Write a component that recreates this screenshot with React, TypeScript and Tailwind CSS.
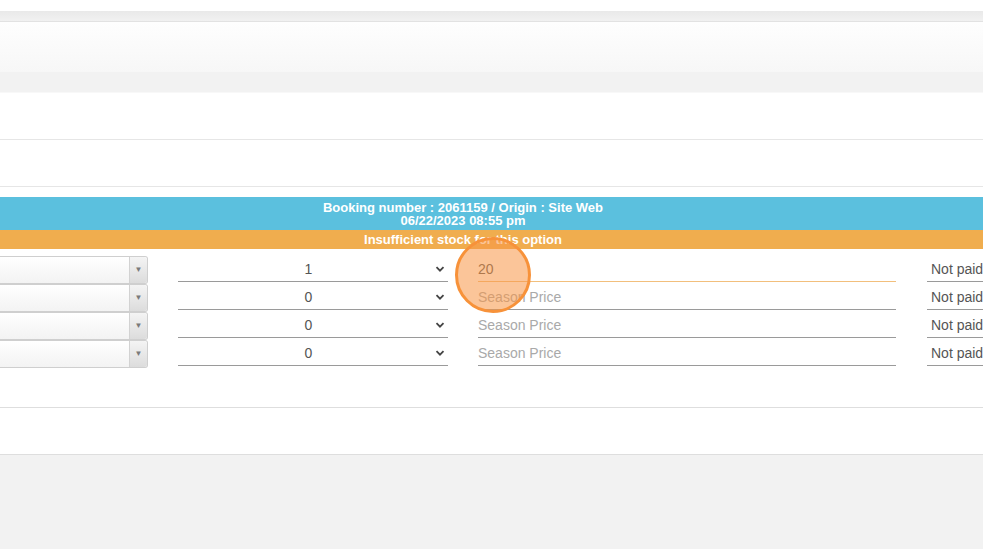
import React from 'react';

const rows = [
  { qty: '1', price: '20', focused: true },
  { qty: '0', price: '', focused: false },
  { qty: '0', price: '', focused: false },
  { qty: '0', price: '', focused: false },
];

const Chevron: React.FC = () => (
  <svg width="10" height="10" viewBox="0 0 10 10" className="text-[#444]">
    <path d="M1.5 3.2 L5 6.7 L8.5 3.2" fill="none" stroke="currentColor" strokeWidth="1.8" />
  </svg>
);

const OptionRow: React.FC<{ qty: string; price: string; focused: boolean }> = ({ qty, price, focused }) => (
  <div className="flex h-[28px] items-start">
    <div className="flex h-[28px] w-[148px] shrink-0 rounded-r-[3px] border border-l-0 border-[#cfcfcf] bg-gradient-to-b from-white to-[#f3f3f3]">
      <div className="flex-1" />
      <div className="flex w-[18px] items-center justify-center rounded-r-[3px] border-l border-[#d2d2d2] bg-gradient-to-b from-[#f4f4f4] to-[#dcdcdc]">
        <span className="text-[8px] leading-none text-[#7a7a7a]">▼</span>
      </div>
    </div>
    <div className="ml-[30px] flex h-[26px] w-[270px] shrink-0 items-center border-b border-[#9a9a9a] pt-[1px] pr-[3px]">
      <span className="flex-1 pl-[4px] text-center text-[14px] text-[#555]">{qty}</span>
      <Chevron />
    </div>
    <div
      className={`ml-[30px] flex h-[26px] w-[418px] shrink-0 items-center border-b pt-[1px] text-[14px] ${
        focused ? 'border-[#f2bf7c]' : 'border-[#9a9a9a]'
      }`}
    >
      {price ? <span className="text-[#555]">{price}</span> : <span className="text-[#a9a9a9]">Season Price</span>}
    </div>
    <div className="ml-[31px] flex h-[26px] flex-1 items-center border-b border-[#9a9a9a] pt-[1px] pl-[4px] text-[14px] whitespace-nowrap text-[#555]">
      Not paid
    </div>
  </div>
);

const App: React.FC = () => {
  return (
    <div className="relative h-[549px] w-[983px] overflow-hidden bg-[#f2f2f2] font-['Liberation_Sans',Arial,sans-serif]">
      <div className="h-[11px] bg-white" />
      <div className="h-[11px] border-b border-[#e3e3e3] bg-gradient-to-b from-[#e9e9e9] to-[#f1f1f1]" />
      <div className="h-[50px] bg-gradient-to-b from-[#fefefe] to-[#f7f7f7] shadow-[0_1px_2px_rgba(0,0,0,0.08)]" />
      <div className="h-[21px] border-b border-[#f8f8f8] bg-[#f2f2f2]" />

      <div className="bg-white">
        <div className="h-[47px] border-b border-[#e6e6e6]" />
        <div className="h-[47px] border-b border-[#e6e6e6]" />
        <div className="h-[10px]" />

        <div className="flex h-[33px] flex-col items-center justify-center bg-[#5bc0de] pr-[57px] text-[13px] leading-[13px] font-bold text-white">
          <div>Booking number : 2061159 / Origin : Site Web</div>
          <div>06/22/2023 08:55 pm</div>
        </div>
        <div className="flex h-[19px] items-center justify-center bg-[#f0ad4e] pr-[57px] text-[13px] font-bold text-white">
          Insufficient stock for this option
        </div>

        <div className="pt-[7px] pb-[39px]">
          {rows.map((r, i) => (
            <OptionRow key={i} {...r} />
          ))}
        </div>

        <div className="h-[48px] border-t border-b border-[#dedede]" />
      </div>

      <div className="absolute top-[237px] left-[455px] h-[76px] w-[76px] rounded-full border-[3px] border-[#f7923a] bg-[rgba(248,150,70,0.55)]" />
    </div>
  );
};

export default App;
